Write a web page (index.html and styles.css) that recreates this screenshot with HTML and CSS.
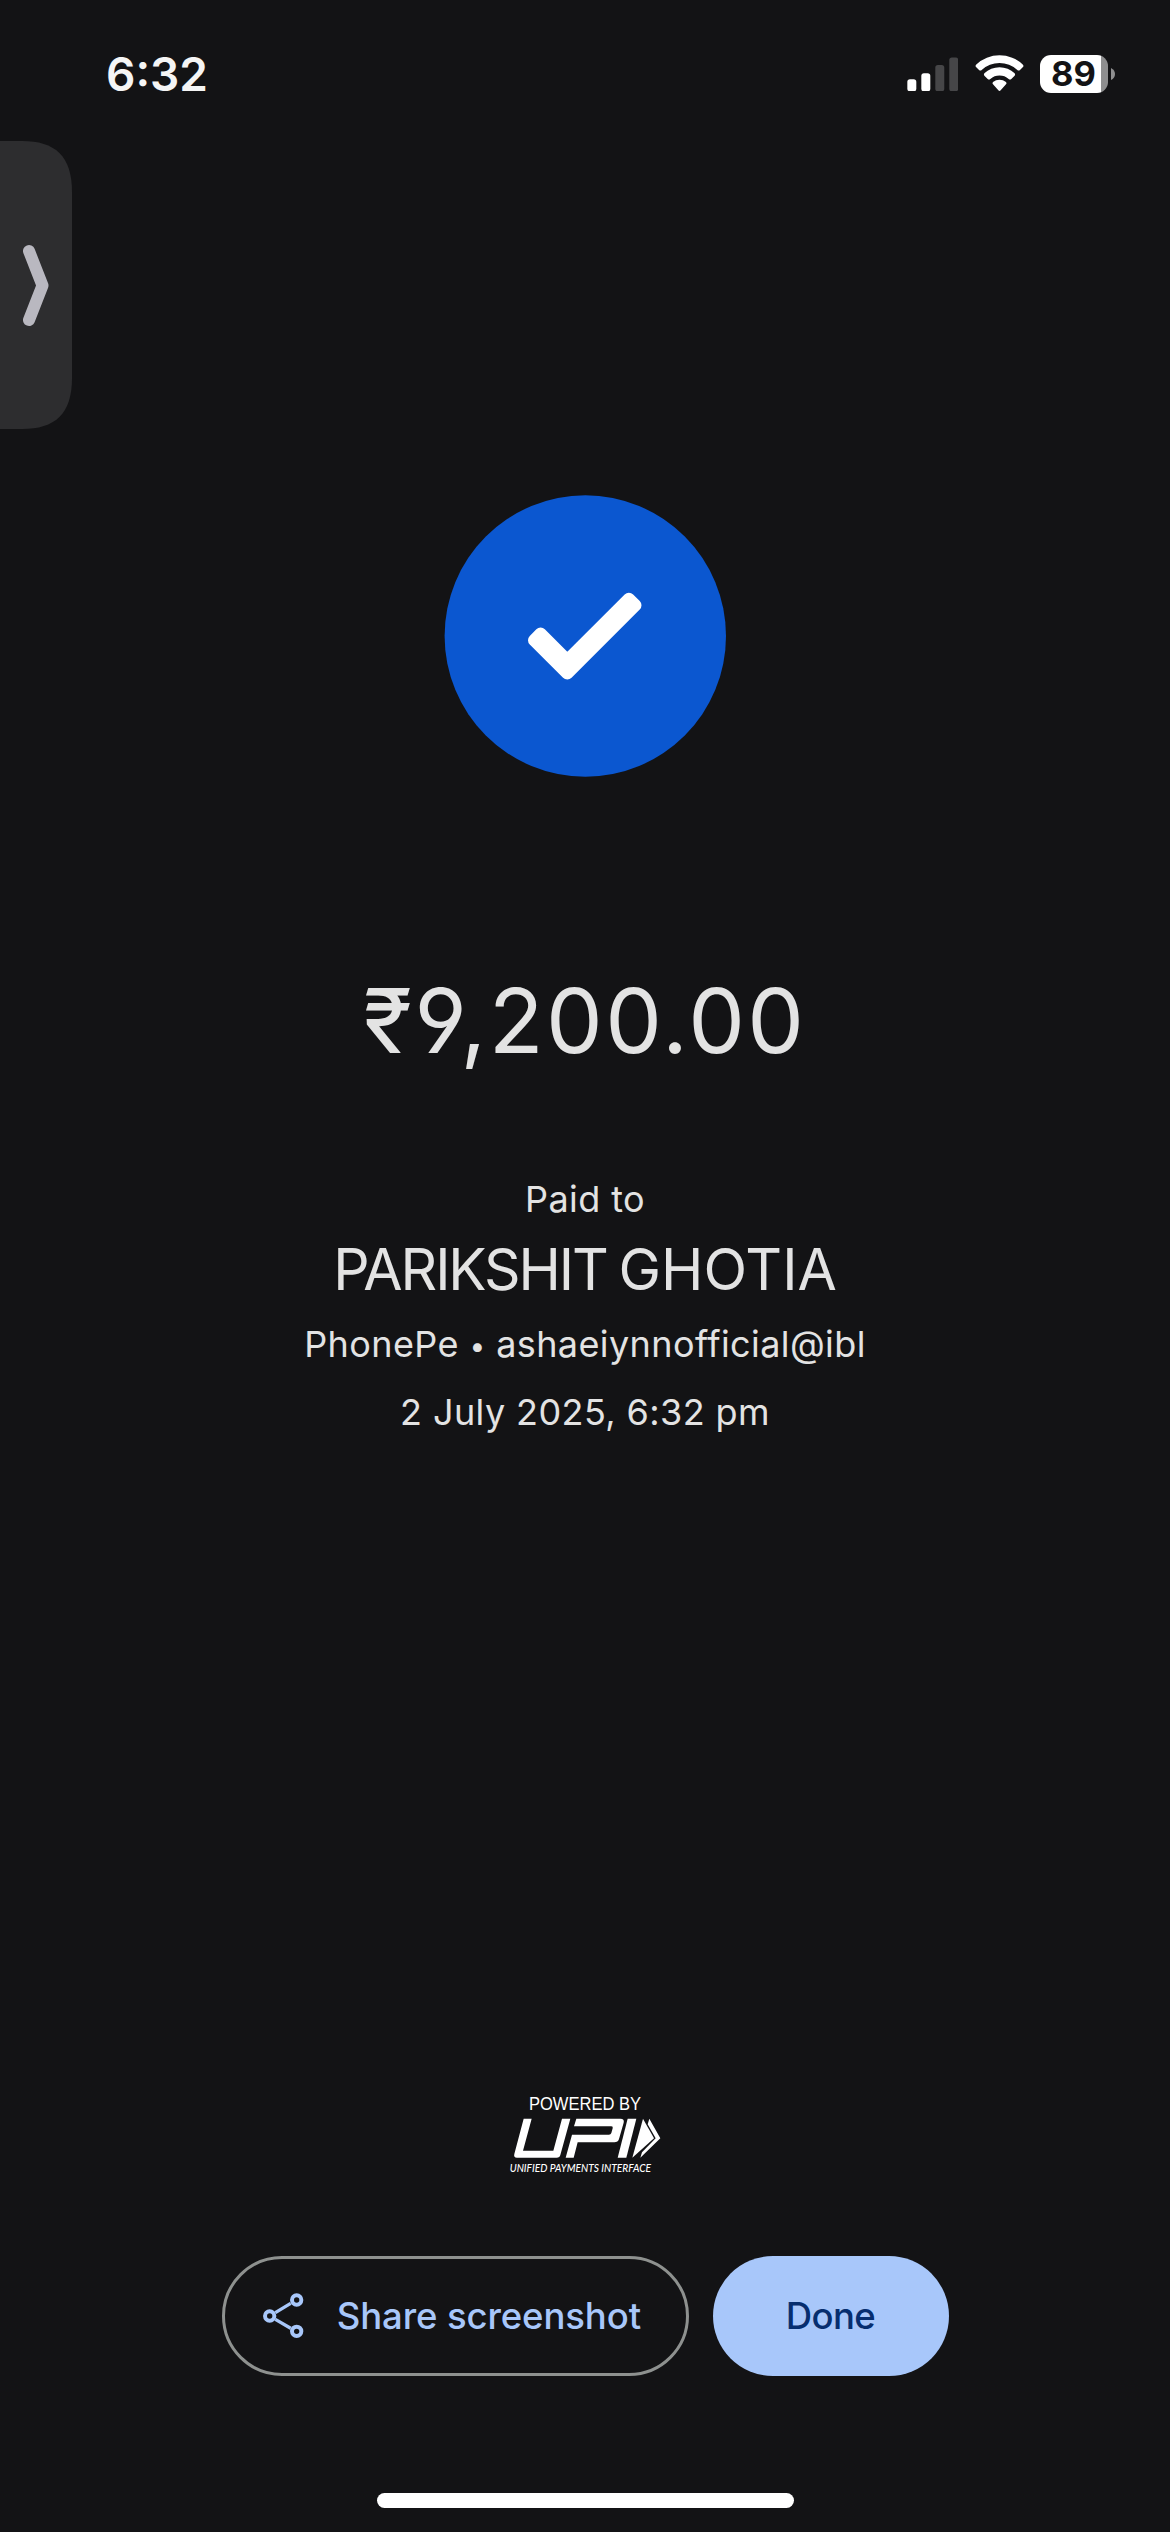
FILE: index.html
```html
<!DOCTYPE html>
<html lang="en">
<head>
<meta charset="utf-8">
<title>Payment successful</title>
<link rel="stylesheet" href="styles.css">
</head>
<body>
<div class="screen">
  <header class="status-bar">
    <span class="time">6:32</span>
    <div class="status-icons">
      <svg class="signal" viewBox="80 80 155 103" fill="#fff">
        <rect x="81" y="147" width="27" height="36" rx="8"/>
        <rect x="123" y="129" width="27" height="54" rx="8"/>
        <rect x="165" y="104" width="27" height="79" rx="8" fill="#464648"/>
        <rect x="207" y="81" width="27" height="102" rx="8" fill="#464648"/>
      </svg>
      <svg class="wifi" viewBox="284 75 147 109" fill="#fff">
        <path d="M287 104 A103 103 0 0 1 428 104 Q431 108 428 111 L419 120 Q415 123 411 120 A79 79 0 0 0 304 120 Q300 123 296 120 L287 111 Q284 108 287 104Z"/>
        <path d="M312 130 A66 66 0 0 1 403 130 Q406 134 403 137 L393 147 Q389 150 385 147 A42 42 0 0 0 330 147 Q326 150 322 147 L312 137 Q309 134 312 130Z"/>
        <path d="M338 156 A31 31 0 0 1 377 156 Q380 160 377 163 L361 181 Q357.500 185 354 181 L338 163 Q335 160 338 156Z"/>
      </svg>
      <div class="battery">
        <div class="battery-body"><span>89</span></div>
        <svg class="battery-nub" viewBox="0 0 4 12"><path d="M0 0 Q4 2 4 6 Q4 10 0 12Z" fill="#8e8e8f"/></svg>
      </div>
    </div>
  </header>

  <div class="edge-tab">
    <svg viewBox="0 0 72 288">
      <path d="M0 0 H22 C55 0 72 15 72 51 V237 C72 273 55 288 22 288 H0Z" fill="#2d2d2f"/>
      <path d="M29 110 L42.500 144.500 L29 179" fill="none" stroke="#b9b8c0" stroke-width="12" stroke-linecap="round" stroke-linejoin="round"/>
    </svg>
  </div>

  <main class="receipt">
    <svg class="success" viewBox="0 0 282 282">
      <circle cx="141.300" cy="141" r="140.700" fill="#0b57d0"/>
      <path d="M123.300 178.500 L191.500 110.300 L184.900 103.700 L123.300 165.300 L96.600 138.600 L90 145.200Z" fill="#fff" stroke="#fff" stroke-width="12" stroke-linejoin="round"/>
    </svg>
    <h1 class="amount">₹9,200.00</h1>
    <p class="label">Paid to</p>
    <h2 class="payee">PARIKSHIT <span class="surname">GHOTIA</span></h2>
    <p class="account">PhonePe <span class="dot">•</span> ashaeiynnofficial@ibl</p>
    <p class="date">2 July 2025, 6:32 pm</p>
  </main>

  <footer class="footer">
    <svg class="upi" viewBox="80 40 471 246" fill="#fff">
      <text class="upi-top" x="146" y="90" textLength="336" lengthAdjust="spacingAndGlyphs">POWERED BY</text>
      <path d="M130 117 H154 L128 213 H219 L245 117 H270 L240 226 Q238 234 229 234 H110 Q99 234 102 223Z"/>
      <path d="M288 117 H420 Q433 117 430 129 L416 178 Q413 188 402 188 H292 L280 234 H256 L275 165 H386 Q391 165 393 160 L397 146 Q399 140 393 140 H281Z"/>
      <path d="M442 117 H468 L438 234 H412Z"/>
      <path d="M488 117 L521 176 L456 234Z"/>
      <path d="M507 117 L540 176 L480 234 L485 218 L526 176 L502 134Z"/>
      <text class="upi-bottom" x="88" y="276" textLength="424" lengthAdjust="spacingAndGlyphs">UNIFIED PAYMENTS INTERFACE</text>
    </svg>
    <div class="actions">
      <button class="btn share">
        <svg viewBox="157 160 122 136" fill="none" stroke="#a8c7fa">
          <path d="M240 191 L194 219 M194 239 L240 266" stroke-width="10"/>
          <g stroke-width="12">
            <circle cx="258" cy="181" r="14"/>
            <circle cx="177" cy="229" r="14"/>
            <circle cx="258" cy="275" r="14"/>
          </g>
        </svg>
        <span>Share screenshot</span>
      </button>
      <button class="btn done">Done</button>
    </div>
    <div class="home-indicator"></div>
  </footer>
</div>
</body>
</html>
```
FILE: styles.css
```css
* { box-sizing: border-box; }

body {
  margin: 0;
  background: #131315;
  color: #e3e3e3;
  font-family: Inter, "Liberation Sans", sans-serif;
}

.screen {
  position: relative;
  display: flex;
  flex-direction: column;
  width: 1170px;
  height: 2532px;
  overflow: hidden;
}

.status-bar {
  display: flex;
  align-items: center;
  justify-content: space-between;
  height: 148px;
  padding: 0 55px 0 106px;
}

.time {
  color: #f5f5f5;
  font-size: 46px;
  font-weight: 600;
  line-height: 60px;
}

.status-icons { display: flex; align-items: center; }
.signal { width: 51.6px; height: 34.4px; margin-right: 16.7px; }
.wifi { width: 49px; height: 36.3px; margin: -2px 16px 0 0; }
.battery { display: flex; align-items: center; gap: 3px; }

.battery-body {
  width: 68px;
  height: 38px;
  border-radius: 11px;
  background: linear-gradient(to right, #fff 61px, #8e8e8f 61px);
  color: #131315;
  font-size: 34.5px;
  font-weight: 700;
  line-height: 38px;
  padding-left: 11px;
}

.battery-nub { width: 4px; height: 12px; }

/* Floating drawer handle that sits over the page */
.edge-tab {
  position: absolute;
  left: 0;
  top: 141px;
  width: 72px;
  height: 288px;
}

.edge-tab svg { display: block; }

.receipt {
  display: flex;
  flex-direction: column;
  align-items: center;
  margin-top: 347px;
  text-align: center;
}

.receipt h1, .receipt h2, .receipt p { margin: 0; font-weight: 400; }
.success { width: 282px; height: 282px; }

.receipt .amount {
  margin: 189px 0 99px;
  font-size: 90px;
  line-height: 110px;
  letter-spacing: 2.4px;
  font-feature-settings: "ss01";
}

.receipt p { font-size: 36px; letter-spacing: 0.4px; }
.receipt .label { line-height: 48px; }

.receipt .payee {
  font-size: 57px;
  line-height: 94px;
  letter-spacing: -2.1px;
  word-spacing: -2px;
}

.receipt .surname { letter-spacing: 0; }
.receipt .account { line-height: 54px; }
.receipt .dot { font-size: 28px; line-height: 1; vertical-align: 1px; }
.receipt .date { line-height: 82px; }

.footer {
  display: flex;
  flex-direction: column;
  align-items: center;
  margin-top: auto;
}

.upi { width: 157px; height: 82px; }
.upi-top { font: 400 54px "Liberation Sans", sans-serif; }
.upi-bottom { font: italic 500 33px Lato, sans-serif; }

.actions { display: flex; gap: 24px; margin-top: 81px; }

.btn {
  display: flex;
  align-items: center;
  justify-content: center;
  height: 120px;
  padding: 0;
  border: 0;
  border-radius: 60px;
  font-family: inherit;
  font-size: 36.5px;
  font-weight: 500;
}

.share {
  width: 467px;
  gap: 33px;
  padding-right: 6px;
  border: 3px solid #8e918f;
  background: transparent;
  color: #a8c7fa;
  letter-spacing: -0.1px;
}

.share svg { width: 40.7px; height: 45.3px; }

.done {
  width: 236px;
  background: #a8c7fa;
  color: #062e6f;
  letter-spacing: -0.6px;
}

.home-indicator {
  width: 417px;
  height: 15px;
  margin: 117px 0 24px;
  border-radius: 8px;
  background: #fff;
}
```
